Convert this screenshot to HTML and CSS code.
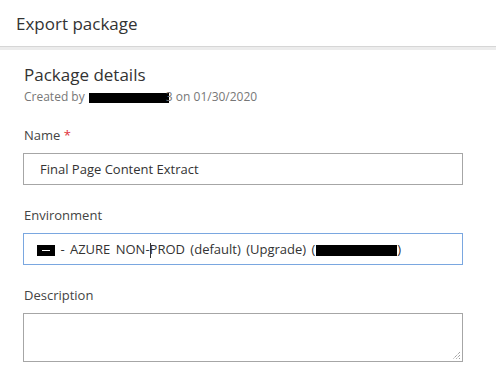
FILE: index.html
```html
<!DOCTYPE html>
<html lang="en">
<head>
  <meta charset="UTF-8" />
  <title>Export package</title>
  <link rel="stylesheet" href="styles.css">
</head>
<body>
  <div class="header">
    <h1>Export package</h1>
  </div>
  <div class="divider"></div>

  <div class="content">
    <h2>Package details</h2>
    <div class="meta">Created by <span class="redact redact-user"></span><span class="tail">3</span> on 01/30/2020</div>

    <div class="field">
      <label>Name <span class="req">*</span></label>
      <div class="input">Final Page Content Extract</div>
    </div>

    <div class="field">
      <label>Environment</label>
      <div class="input focused"><span class="redact redact-code"><span class="dash"></span></span> - AZURE NON-<span class="caret"></span>PROD (default) (Upgrade) (<span class="redact redact-org"></span>)</div>
    </div>

    <div class="field">
      <label>Description</label>
      <div class="textarea">
        <svg class="grip" width="10" height="10" viewBox="0 0 10 10">
          <path d="M9 2 L2 9 M9 5 L5 9 M9 8 L8 9" stroke="#777" stroke-width="1" stroke-dasharray="1 1" fill="none"/>
        </svg>
      </div>
    </div>
  </div>
</body>
</html>
```

FILE: styles.css
```css
body {
  margin: 0;
  font-family: "Segoe UI", "Open Sans", sans-serif;
  color: #333;
  background: #fff;
}
.header {
  height: 46px;
  padding-left: 16px;
  display: flex;
  align-items: center;
}
h1 {
  margin: 0;
  font-size: 17px;
  font-weight: 400;
  color: #333;
}
.divider {
  width: 496px;
  height: 3px;
  border-top: 1px solid #d6d6d6;
  background: #ececec;
}
.content {
  padding: 14px 40px 0 23px;
}
h2 {
  margin: 0 0 0 1px;
  font-size: 17px;
  font-weight: 400;
  color: #333;
  line-height: 22px;
}
.meta {
  margin: 3px 0 0 1px;
  font-size: 12px;
  color: #777;
  line-height: 16px;
}
.redact {
  display: inline-block;
  background: #000;
  vertical-align: middle;
}
.redact-user {
  width: 80px;
  height: 10px;
  margin-left: 1px;
}
.tail {
  margin-left: -3px;
  color: #777;
}
.field {
  margin-top: 21px;
}
label {
  display: block;
  margin-left: 1px;
  font-size: 13px;
  color: #444;
  line-height: 18px;
  margin-bottom: 9px;
}
.req {
  color: #e0303a;
}
.input {
  height: 30px;
  border: 1px solid #a6a6a6;
  padding-left: 16px;
  font-size: 13px;
  line-height: 30px;
  color: #333;
  white-space: nowrap;
  overflow: hidden;
}
.input.focused {
  border-color: #7aa7e0;
  padding-left: 13px;
  word-spacing: 2px;
}
.redact-code {
  width: 18px;
  height: 11px;
  position: relative;
}
.dash {
  position: absolute;
  left: 5px;
  top: 5px;
  width: 8px;
  height: 1px;
  background: #fff;
}
.caret {
  display: inline-block;
  width: 1px;
  height: 15px;
  background: #333;
  vertical-align: middle;
  margin-right: -1px;
}
.redact-org {
  width: 81px;
  height: 11px;
  margin-left: 1px;
}
.textarea {
  height: 47px;
  border: 1px solid #a6a6a6;
  position: relative;
}
.grip {
  position: absolute;
  right: 1px;
  bottom: 1px;
}
```
